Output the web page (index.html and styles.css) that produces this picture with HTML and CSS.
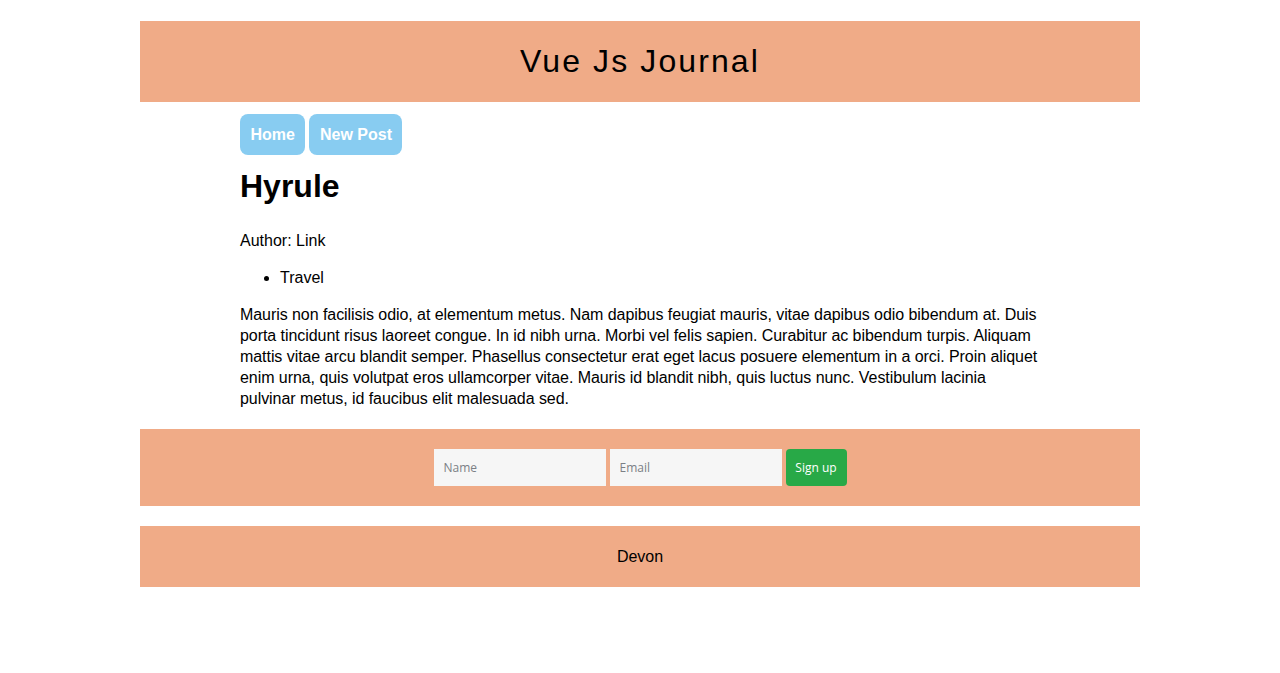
FILE: index.html
```html
<!DOCTYPE html>
<html lang="en">
<head>
<meta charset="utf-8">
<title>Vue Js Journal</title>
<link rel="stylesheet" href="styles.css">
</head>
<body>
<div class="page">
  <header class="site-header">
    <h2 class="site-title">Vue Js Journal</h2>
  </header>
  <main class="content">
    <nav class="nav">
      <a class="nav-btn" href="#">Home</a>
      <a class="nav-btn" href="#">New Post</a>
    </nav>
    <h1 class="post-title">Hyrule</h1>
    <p class="author">Author: Link</p>
    <ul class="tags">
      <li>Travel</li>
    </ul>
    <p class="post-body">Mauris non facilisis odio, at elementum metus. Nam dapibus feugiat mauris, vitae dapibus odio bibendum at. Duis porta tincidunt risus laoreet congue. In id nibh urna. Morbi vel felis sapien. Curabitur ac bibendum turpis. Aliquam mattis vitae arcu blandit semper. Phasellus consectetur erat eget lacus posuere elementum in a orci. Proin aliquet enim urna, quis volutpat eros ullamcorper vitae. Mauris id blandit nibh, quis luctus nunc. Vestibulum lacinia pulvinar metus, id faucibus elit malesuada sed.</p>
  </main>
  <section class="signup">
    <form class="signup-form">
      <input class="field" type="text" placeholder="Name">
      <input class="field" type="email" placeholder="Email">
      <button class="signup-btn" type="button">Sign up</button>
    </form>
  </section>
  <footer class="site-footer">Devon</footer>
</div>
</body>
</html>
```
FILE: styles.css
```css
html, body {
  margin: 0;
  padding: 0;
  background: #ffffff;
}

body {
  font-family: "Liberation Sans", Arial, sans-serif;
  font-size: 16px;
  color: #000;
}

.page {
  width: 1000px;
  margin: 21px auto 0;
}

.site-header {
  background: #f0ab87;
  height: 81px;
  display: flex;
  align-items: center;
  justify-content: center;
}

.site-title {
  margin: 0;
  font-weight: normal;
  font-size: 32px;
  letter-spacing: 2.1px;
}

.content {
  width: 800px;
  margin: 0 auto;
  padding: 12px 0 0;
}

.nav {
  display: flex;
  gap: 4px;
}

.nav-btn {
  display: block;
  background: #88ccf1;
  color: #fff;
  font-weight: bold;
  text-decoration: none;
  padding: 12px 10.5px 11px;
  border-radius: 8px;
  line-height: 18px;
}

.post-title {
  font-size: 32px;
  margin: 13px 0 25px;
  line-height: 37px;
}

.author {
  margin: 0 0 16px;
  line-height: 21px;
}

.tags {
  margin: 0 0 16px;
  padding-left: 40px;
  line-height: 21px;
}

.post-body {
  margin: 0;
  line-height: 21px;
  letter-spacing: -0.06px;
}

.signup {
  background: #f0ab87;
  margin-top: 20px;
  padding: 20px 0;
}

.signup-form {
  display: flex;
  justify-content: center;
  gap: 4px;
}

.field {
  width: 172px;
  height: 37px;
  box-sizing: border-box;
  border: none;
  background: #f6f6f6;
  padding: 0 10px;
  font-family: "Open Sans", "Noto Sans", sans-serif;
  font-size: 12px;
  color: #333;
  outline: none;
}

.field::placeholder {
  color: #7b7f85;
}

.signup-btn {
  height: 37px;
  width: 61px;
  border: none;
  border-radius: 4px;
  background: #28a947;
  color: #fff;
  font-family: "Open Sans", "Noto Sans", sans-serif;
  font-size: 12px;
  padding: 0;
}

.site-footer {
  background: #f0ab87;
  margin-top: 20px;
  height: 61px;
  display: flex;
  align-items: center;
  justify-content: center;
}
```
